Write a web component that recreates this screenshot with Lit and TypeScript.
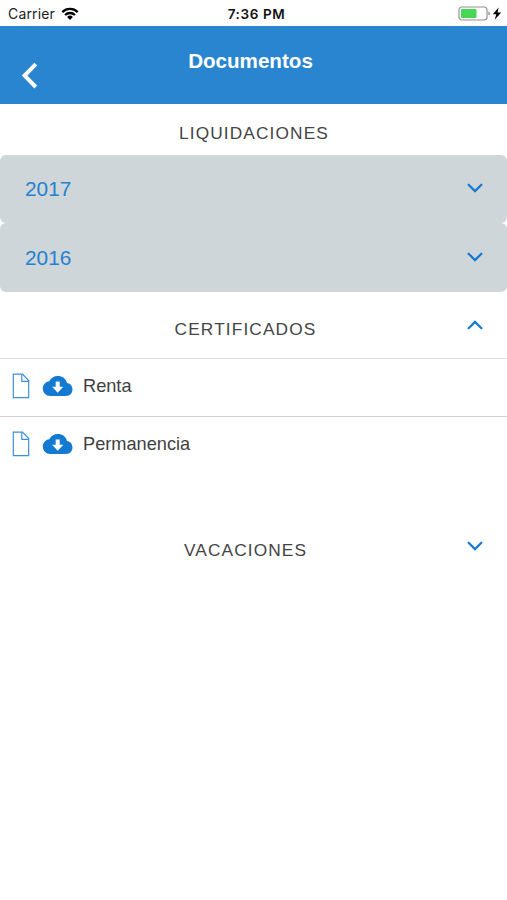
import { LitElement, html, css, svg } from "lit";
import { customElement, property } from "lit/decorators.js";

@customElement("chevron-icon")
class ChevronIcon extends LitElement {
  @property({ type: Boolean }) up = false;

  static styles = css`
    :host { display: block; width: 16px; height: 10px; }
    svg { display: block; }
    path { fill: none; stroke: #1479d1; stroke-width: 2.2; stroke-linecap: round; stroke-linejoin: miter; }
  `;

  render() {
    return html`<svg width="16" height="10" viewBox="0 0 16 10">
      ${this.up ? svg`<path d="M1.6 8.3 8 1.9l6.4 6.4"/>` : svg`<path d="M1.6 1.7 8 8.1l6.4-6.4"/>`}
    </svg>`;
  }
}

@customElement("document-row")
class DocumentRow extends LitElement {
  @property() label = "";

  static styles = css`
    :host { display: flex; align-items: center; box-sizing: border-box; height: 57px; padding: 0 0 2px 12px; }
    svg { display: block; flex: none; }
    .file { margin-right: 12px; }
    .cloud { margin-right: 10px; }
    .label { font-size: 18.2px; line-height: 24px; color: #3f3f3f; }
  `;

  render() {
    return html`
      <svg class="file" width="18" height="26" viewBox="0 0 18 26" fill="none" stroke="#3b8fd9" stroke-width="1.2">
        <path d="M1.3 1.2h9.2l6.2 6.3v17.2H1.3z"/>
        <path d="M9.8 1.4v6.9h6.8"/>
      </svg>
      <svg class="cloud" width="31" height="22" viewBox="0 0 31 22">
        <path fill="#1479d1" d="M25 8C24.1 3.5 20.300 .9 15.700 .9C12 .9 8.800 2.900 7.300 6.300C3.500 6.700 .8 9.800 .8 13.600C.8 17.800 4.100 21.100 8.300 21.100H24C27.600 21.100 30.500 18.300 30.500 14.600C30.500 11.100 28.200 8.300 25 8Z"/>
        <path fill="#fff" d="M13.700 6.600h4v5.200h3.600l-5.600 5.900-5.600-5.900h3.600z"/>
      </svg>
      <span class="label">${this.label}</span>`;
  }
}

@customElement("app-root")
class AppRoot extends LitElement {
  static styles = css`
    :host {
      display: flex; flex-direction: column; height: 900px; overflow: hidden;
      background: #fff; color: #444; font-family: "Liberation Sans", Arial, sans-serif;
    }
    svg { display: block; }
    .status {
      display: grid; grid-template-columns: 1fr auto 1fr; align-items: center;
      box-sizing: border-box; height: 25.5px; padding: 2px 5px 0 8px;
      font: 14px/24px Inter, sans-serif; color: #222;
    }
    .carrier { display: flex; align-items: center; gap: 6px; }
    .carrier span { letter-spacing: 0.15px; }
    .carrier svg, .power svg { margin-top: -1px; }
    .clock { font-size: 13.5px; font-weight: 600; color: #111; letter-spacing: 0.6px; padding-left: 3px; }
    .power { display: flex; justify-content: flex-end; align-items: center; gap: 1px; }
    .nav {
      display: grid; grid-template-columns: 60px 1fr 66px; height: 78px;
      background: #2a85d0; color: #fff;
    }
    .back { padding: 36px 0 0 21px; }
    .title { margin: 0; padding-top: 22px; text-align: center; font-size: 20.6px; line-height: 25px; font-weight: 700; }
    .heading {
      display: grid; grid-template-columns: 1fr auto 1fr; align-items: center;
      box-sizing: border-box; padding: 0 24px 0 8px;
    }
    .heading h2 {
      grid-column: 2; margin: 0; font-size: 17.3px; line-height: 22px; font-weight: 400; letter-spacing: 1.12px;
    }
    .heading chevron-icon { justify-self: end; margin-bottom: 8px; }
    .payslips { height: 51px; padding: 7px 0 0 1px; }
    .certificates { height: 66px; padding-top: 9px; }
    .vacations { height: 60px; margin-top: 47px; }
    .year {
      display: flex; align-items: center; justify-content: space-between; box-sizing: border-box;
      height: 68.5px; padding: 0 24px 0 25px; border-radius: 6px; background: #ced6d9;
      font-size: 20.8px; color: #2580d0;
    }
    .year span { padding-top: 1px; }
    .year chevron-icon { margin-bottom: 1px; }
    .list { border-top: 1px solid #e2e2e2; }
    .list document-row + document-row { border-top: 1px solid #d2d2d2; }
  `;

  private year(label: string) {
    return html`<div class="year"><span>${label}</span><chevron-icon></chevron-icon></div>`;
  }

  render() {
    return html`
      <div class="status">
        <div class="carrier">
          <span>Carrier</span>
          <svg width="18" height="13" viewBox="0 0 18 13" fill="none" stroke="#000" stroke-width="2.3">
            <path d="M1.300 5.100a11 11 0 0 1 15.400 0"/>
            <path d="M4.100 8a7 7 0 0 1 9.800 0"/>
            <path fill="#000" stroke="none" d="M6.100 10a4.200 4.200 0 0 1 5.800 0L9 12.900z"/>
          </svg>
        </div>
        <span class="clock">7:36 PM</span>
        <div class="power">
          <svg width="33" height="15" viewBox="0 0 33 15">
            <rect x="1" y="1" width="28" height="13" rx="3" fill="#fff" stroke="#929292" stroke-width="1.200"/>
            <rect x="3" y="3" width="15.500" height="9" rx="1" fill="#48d655"/>
            <path d="M30.300 5.400q1.700.5 1.700 2.100t-1.700 2.100z" fill="#929292"/>
          </svg>
          <svg width="10" height="13" viewBox="0 0 10 13"><path d="M6.600.4.900 7.200h3.400L2.700 12.800 9.200 5.400H5.600z"/></svg>
        </div>
      </div>
      <header class="nav">
        <div class="back">
          <svg width="18" height="28" viewBox="0 0 18 28"><path d="M14.800 2.200 3.600 13.600l11.200 11.400" fill="none" stroke="#fff" stroke-width="4"/></svg>
        </div>
        <h1 class="title">Documentos</h1>
      </header>
      <div class="heading payslips"><h2>LIQUIDACIONES</h2></div>
      ${this.year("2017")} ${this.year("2016")}
      <div class="heading certificates"><h2>CERTIFICADOS</h2><chevron-icon up></chevron-icon></div>
      <div class="list">
        <document-row label="Renta"></document-row>
        <document-row label="Permanencia"></document-row>
      </div>
      <div class="heading vacations"><h2>VACACIONES</h2><chevron-icon></chevron-icon></div>
    `;
  }
}
